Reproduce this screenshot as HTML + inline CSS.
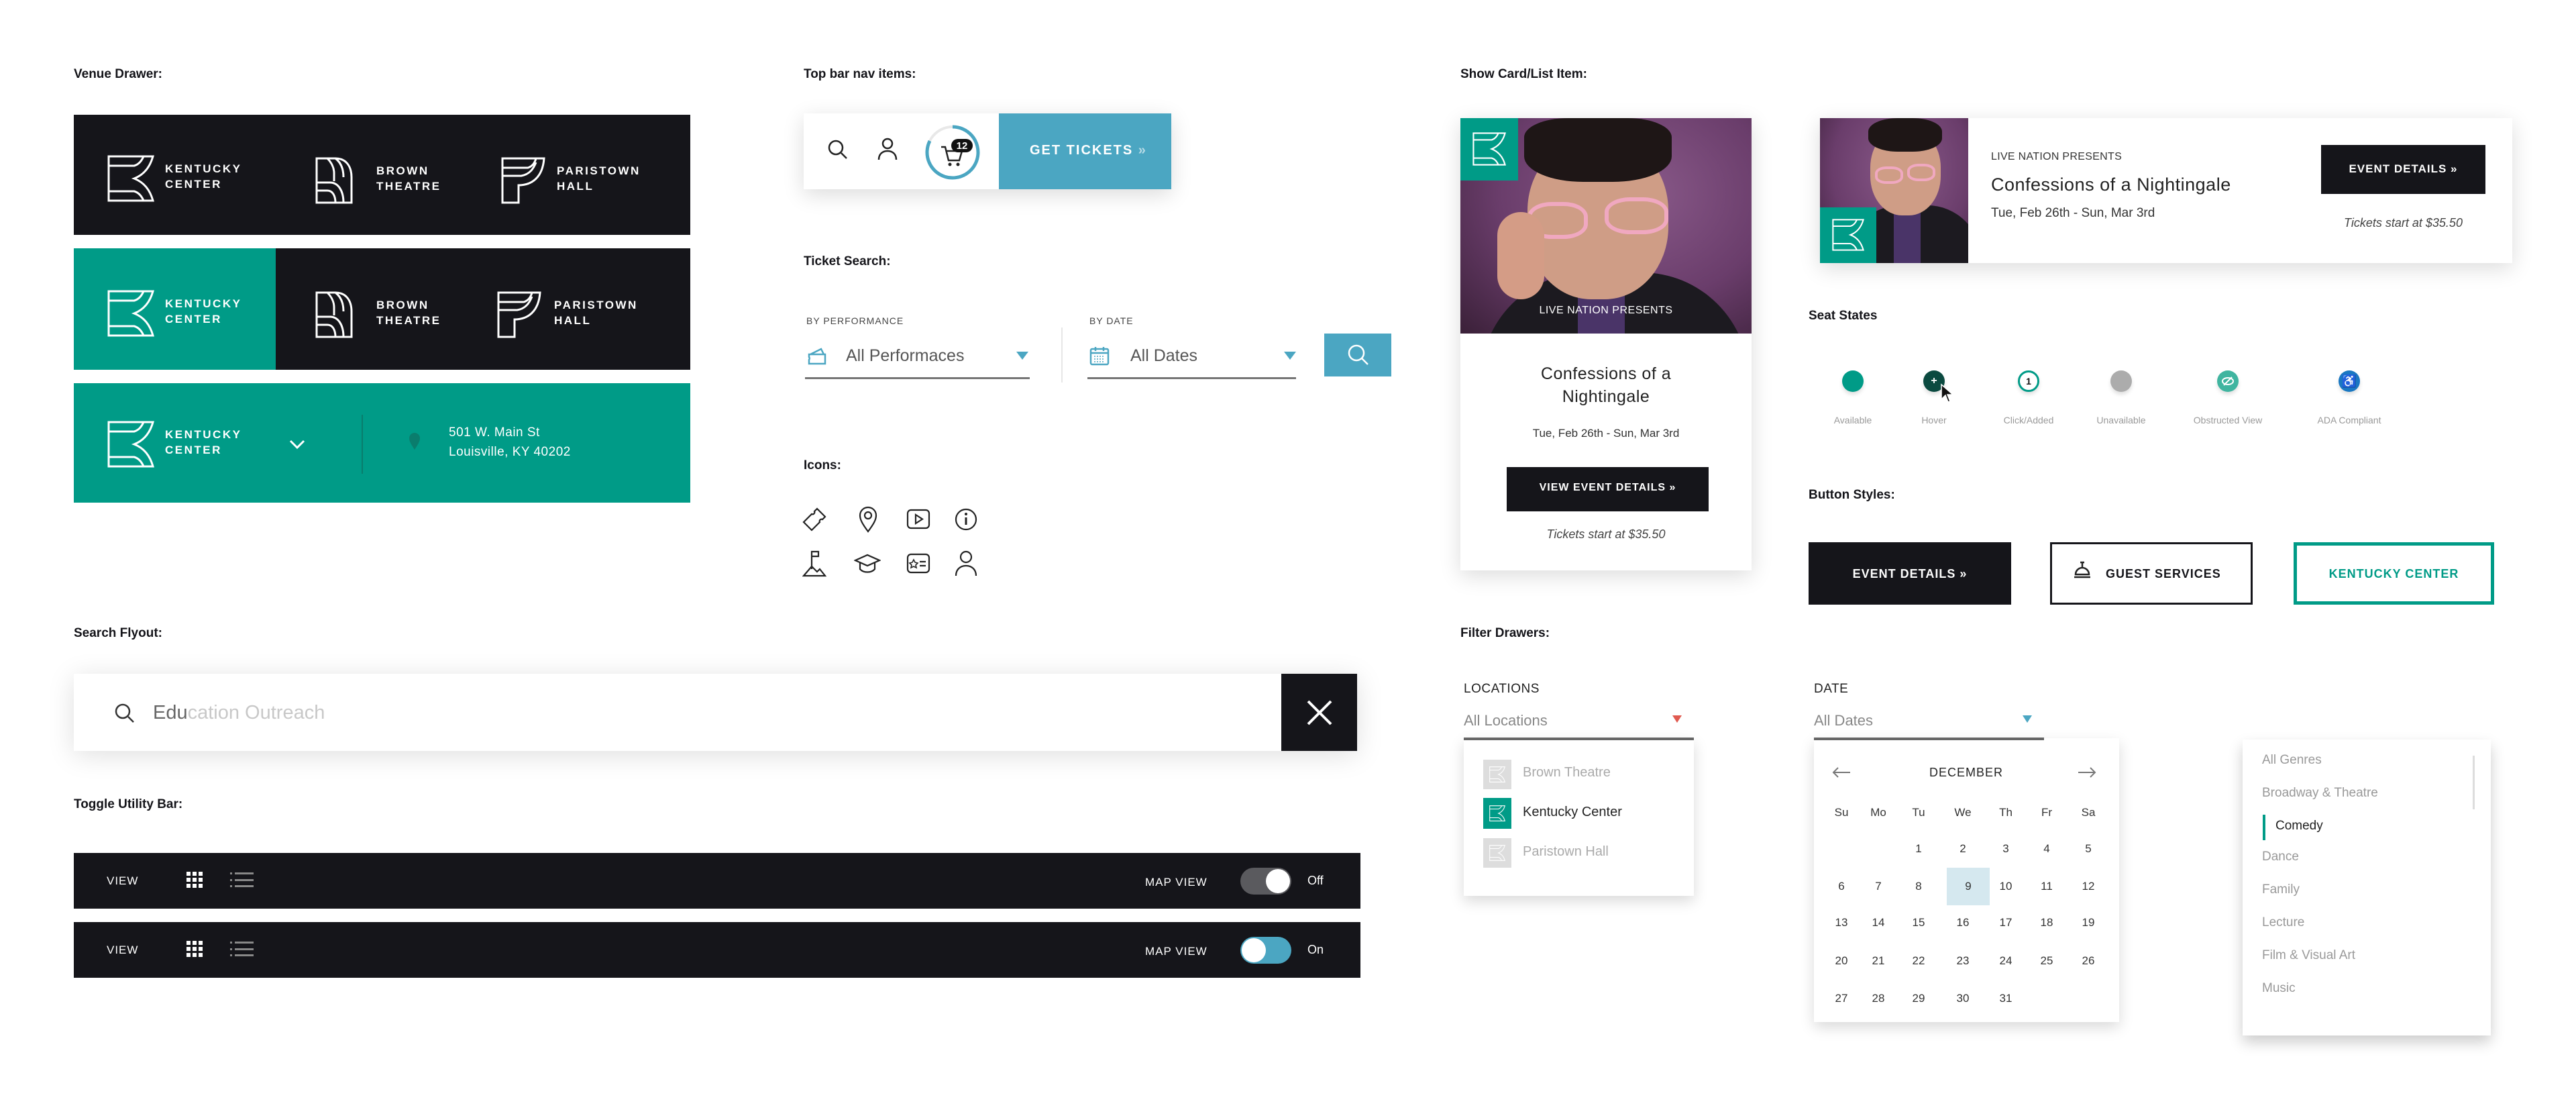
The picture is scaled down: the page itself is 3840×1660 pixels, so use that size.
<!DOCTYPE html>
<html><head><meta charset="utf-8">
<style>
*{margin:0;padding:0;box-sizing:border-box}
body{width:3840px;height:1660px;background:#fff;position:relative;overflow:hidden;font-family:"Liberation Sans",sans-serif;color:#141419}
.a{position:absolute}
.lbl{position:absolute;font-weight:bold;font-size:19px;color:#141419}
.dark{background:#15151a}
.teal{background:#009b87}
.vt{position:absolute;color:#fff;font-weight:bold;font-size:17px;letter-spacing:2.5px;line-height:23px}
.sh{box-shadow:0 8px 30px rgba(0,0,0,.14)}
.small{font-size:14px;letter-spacing:1px;color:#444}
.seatl{position:absolute;top:618px;font-size:14px;color:#999;transform:translateX(-50%);white-space:nowrap}
.seat{position:absolute;top:552px;width:32px;height:32px;border-radius:50%;transform:translateX(-50%);box-shadow:0 4px 6px rgba(0,0,0,.12);display:flex;align-items:center;justify-content:center;color:#fff;font-size:16px;font-weight:bold}
.cal{position:absolute;font-size:17px;color:#333;transform:translateX(-50%)}
.gen{position:absolute;left:3372px;font-size:19px;color:#999}
</style></head><body>

<svg width="0" height="0" style="position:absolute">
<defs>
<g id="K" fill="none" stroke="currentColor" stroke-width="3">
<path d="M2 2H68C63 20 53 30 40 35C53 40 63 50 68 68H2Z"/>
<path d="M2 16H40C47 14 51 9 54 2"/>
<path d="M2 54H40C47 56 51 61 54 68"/>
</g>
<g id="B" fill="none" stroke="currentColor" stroke-width="3">
<path d="M2 2H30C46 2 54 14 54 30V68H2Z"/>
<path d="M2 38H22C34 38 42 50 42 68"/>
<path d="M2 50H18C26 50 30 58 30 68"/>
<path d="M30 2C38 8 42 18 42 30"/>
<path d="M18 2C24 8 28 16 28 24V36"/>
</g>
<g id="P" fill="none" stroke="currentColor" stroke-width="3">
<path d="M2 2H64C62 30 46 42 26 42V68H2Z"/>
<path d="M2 16H40C46 14 50 10 52 2"/>
<path d="M2 28H30C42 26 48 18 52 8"/>
</g>
</defs></svg>

<!-- Venue Drawer -->
<div class="lbl" style="left:110px;top:100px">Venue Drawer:</div>
<div class="a dark" style="left:110px;top:171px;width:919px;height:179px"></div>
<svg class="a" style="left:160px;top:231px;color:#fff" width="70" height="70" viewBox="0 0 70 70"><use href="#K"/></svg>
<div class="vt" style="left:246px;top:240px">KENTUCKY<br>CENTER</div>
<svg class="a" style="left:470px;top:234px;color:#fff" width="58" height="70" viewBox="0 0 58 70"><use href="#B"/></svg>
<div class="vt" style="left:561px;top:243px">BROWN<br>THEATRE</div>
<svg class="a" style="left:747px;top:234px;color:#fff" width="66" height="70" viewBox="0 0 66 70"><use href="#P"/></svg>
<div class="vt" style="left:830px;top:243px">PARISTOWN<br>HALL</div>

<div class="a dark" style="left:110px;top:370px;width:919px;height:181px"></div>
<div class="a teal" style="left:110px;top:370px;width:301px;height:181px"></div>
<svg class="a" style="left:160px;top:432px;color:#fff" width="70" height="70" viewBox="0 0 70 70"><use href="#K"/></svg>
<div class="vt" style="left:246px;top:441px">KENTUCKY<br>CENTER</div>
<svg class="a" style="left:470px;top:434px;color:#fff" width="58" height="70" viewBox="0 0 58 70"><use href="#B"/></svg>
<div class="vt" style="left:561px;top:443px">BROWN<br>THEATRE</div>
<svg class="a" style="left:741px;top:434px;color:#fff" width="66" height="70" viewBox="0 0 66 70"><use href="#P"/></svg>
<div class="vt" style="left:826px;top:443px">PARISTOWN<br>HALL</div>

<div class="a teal" style="left:110px;top:571px;width:919px;height:178px"></div>
<svg class="a" style="left:160px;top:627px;color:#fff" width="70" height="70" viewBox="0 0 70 70"><use href="#K"/></svg>
<div class="vt" style="left:246px;top:636px">KENTUCKY<br>CENTER</div>
<svg class="a" style="left:430px;top:654px" width="26" height="16" viewBox="0 0 26 16"><path d="M3 3L13 13L23 3" fill="none" stroke="#fff" stroke-width="3"/></svg>
<div class="a" style="left:539px;top:618px;width:2px;height:88px;background:#0a7d6d"></div>
<svg class="a" style="left:608px;top:643px" width="20" height="28" viewBox="0 0 20 28"><path d="M10 27C4 18 2 14 2 10A8 8 0 0 1 18 10C18 14 16 18 10 27Z" fill="#0a7d6d"/></svg>
<div class="a" style="left:669px;top:630px;color:#fff;font-size:19px;line-height:29px;letter-spacing:.5px">501 W. Main St<br>Louisville, KY 40202</div>

<!-- Top bar nav -->
<div class="lbl" style="left:1198px;top:100px">Top bar nav items:</div>
<div class="a sh" style="left:1198px;top:169px;width:548px;height:113px;background:#fff"></div>
<div class="a" style="left:1489px;top:169px;width:257px;height:113px;background:#4ba6c2"></div>
<div class="a" style="left:1535px;top:213px;color:#fff;font-weight:bold;font-size:20px;letter-spacing:2px">GET TICKETS <span style="opacity:.6">»</span></div>
<svg class="a" style="left:1233px;top:207px" width="32" height="32" viewBox="0 0 32 32"><circle cx="13" cy="13" r="10" fill="none" stroke="#222" stroke-width="2.5"/><path d="M21 21L29 29" stroke="#222" stroke-width="2.5"/></svg>
<svg class="a" style="left:1307px;top:205px" width="32" height="34" viewBox="0 0 32 34"><circle cx="16" cy="9" r="7" fill="none" stroke="#222" stroke-width="2.5"/><path d="M3 33C3 24 9 20 16 20S29 24 29 33" fill="none" stroke="#222" stroke-width="2.5"/></svg>
<svg class="a" style="left:1378px;top:185px" width="84" height="84" viewBox="0 0 84 84"><circle cx="42" cy="42" r="38" fill="none" stroke="#e8e8e8" stroke-width="4"/><path d="M42 4A38 38 0 1 1 8 25" fill="none" stroke="#4ba6c2" stroke-width="5"/><path d="M25 34H31L36 54H52L56 40H33" fill="none" stroke="#222" stroke-width="2.5"/><circle cx="38" cy="60" r="2.5" fill="#222"/><circle cx="50" cy="60" r="2.5" fill="#222"/><rect x="40" y="22" width="32" height="20" rx="10" fill="#111"/><text x="56" y="37" text-anchor="middle" fill="#fff" font-size="15" font-weight="bold" font-family="Liberation Sans">12</text></svg>

<!-- Ticket Search -->
<div class="lbl" style="left:1198px;top:379px">Ticket Search:</div>
<div class="a small" style="left:1202px;top:470px">BY PERFORMANCE</div>
<svg class="a" style="left:1204px;top:518px" width="30" height="28" viewBox="0 0 30 28"><path d="M2 10H26V24H2V18A3 3 0 0 0 2 14Z M4 10L20 2L24 10" fill="none" stroke="#4ba6c2" stroke-width="2.5"/></svg>
<div class="a" style="left:1261px;top:516px;font-size:25px;color:#555">All Performaces</div>
<svg class="a" style="left:1515px;top:524px" width="18" height="14"><path d="M0 0H18L9 12Z" fill="#4ba6c2"/></svg>
<div class="a" style="left:1200px;top:562px;width:335px;height:3px;background:#777"></div>
<div class="a" style="left:1582px;top:488px;width:2px;height:82px;background:#e6e6e6"></div>
<div class="a small" style="left:1624px;top:470px">BY DATE</div>
<svg class="a" style="left:1624px;top:515px" width="30" height="30" viewBox="0 0 30 30"><rect x="2" y="5" width="26" height="23" rx="2" fill="none" stroke="#4ba6c2" stroke-width="2.5"/><path d="M2 11H28M9 2V8M21 2V8" stroke="#4ba6c2" stroke-width="2.5"/><path d="M7 16H23M7 20H23M7 24H23" stroke="#4ba6c2" stroke-width="1.5" stroke-dasharray="2 2"/></svg>
<div class="a" style="left:1685px;top:516px;font-size:25px;color:#555">All Dates</div>
<svg class="a" style="left:1914px;top:524px" width="18" height="14"><path d="M0 0H18L9 12Z" fill="#4ba6c2"/></svg>
<div class="a" style="left:1621px;top:562px;width:311px;height:3px;background:#777"></div>
<div class="a" style="left:1974px;top:497px;width:100px;height:64px;background:#4ba6c2"></div>
<svg class="a" style="left:2008px;top:512px" width="34" height="34" viewBox="0 0 34 34"><circle cx="14" cy="14" r="11" fill="none" stroke="#fff" stroke-width="2.5"/><path d="M22 22L31 31" stroke="#fff" stroke-width="2.5"/></svg>

<!-- Icons -->
<div class="lbl" style="left:1198px;top:683px">Icons:</div>
<svg class="a" style="left:1196px;top:756px" width="36" height="36" viewBox="0 0 36 36"><path d="M22 2L34 14L30 18A3 3 0 0 0 26 22L14 34L2 22L14 10A3 3 0 0 0 18 6Z" fill="none" stroke="#222" stroke-width="2.2"/></svg>
<svg class="a" style="left:1279px;top:754px" width="30" height="40" viewBox="0 0 30 40"><path d="M15 38C6 26 3 20 3 14A12 12 0 0 1 27 14C27 20 24 26 15 38Z" fill="none" stroke="#222" stroke-width="2.2"/><circle cx="15" cy="14" r="5" fill="none" stroke="#222" stroke-width="2.2"/></svg>
<svg class="a" style="left:1351px;top:758px" width="36" height="32" viewBox="0 0 36 32"><rect x="2" y="2" width="32" height="27" rx="5" fill="none" stroke="#222" stroke-width="2.2"/><path d="M14 9L24 15.5L14 22Z" fill="none" stroke="#222" stroke-width="2.2"/></svg>
<svg class="a" style="left:1422px;top:756px" width="36" height="36" viewBox="0 0 36 36"><circle cx="18" cy="18" r="15" fill="none" stroke="#222" stroke-width="2.2"/><path d="M18 15V26" stroke="#222" stroke-width="3"/><circle cx="18" cy="10" r="2" fill="#222"/></svg>
<svg class="a" style="left:1196px;top:820px" width="36" height="40" viewBox="0 0 36 40"><path d="M14 28V2H24V9H14" fill="none" stroke="#222" stroke-width="2.2"/><path d="M2 38L14 24L22 32L26 28L34 38Z" fill="none" stroke="#222" stroke-width="2.2"/></svg>
<svg class="a" style="left:1273px;top:824px" width="40" height="32" viewBox="0 0 40 32"><path d="M2 11L20 3L38 11L20 19Z" fill="none" stroke="#222" stroke-width="2.2"/><path d="M9 15V24C14 30 26 30 31 24V15" fill="none" stroke="#222" stroke-width="2.2"/></svg>
<svg class="a" style="left:1351px;top:824px" width="36" height="32" viewBox="0 0 36 32"><rect x="2" y="2" width="32" height="27" rx="5" fill="none" stroke="#222" stroke-width="2.2"/><path d="M11 10L13 14L17 15L14 18L15 22L11 20L7 22L8 18L5 15L9 14Z" fill="none" stroke="#222" stroke-width="1.6"/><path d="M20 13H29M20 19H29" stroke="#222" stroke-width="2.2"/></svg>
<svg class="a" style="left:1422px;top:820px" width="36" height="40" viewBox="0 0 36 40"><circle cx="18" cy="10" r="8" fill="none" stroke="#222" stroke-width="2.2"/><path d="M3 38C3 28 10 23 18 23S33 28 33 38" fill="none" stroke="#222" stroke-width="2.2"/></svg>

<!-- Search flyout -->
<div class="lbl" style="left:110px;top:933px">Search Flyout:</div>
<div class="a" style="left:110px;top:1004px;width:1913px;height:115px;background:#fff;box-shadow:0 6px 40px rgba(0,0,0,.13)"></div>
<div class="a dark" style="left:1910px;top:1004px;width:113px;height:115px"></div>
<svg class="a" style="left:1946px;top:1041px" width="42" height="42" viewBox="0 0 42 42"><path d="M4 4L38 38M38 4L4 38" stroke="#fff" stroke-width="4"/></svg>
<svg class="a" style="left:170px;top:1047px" width="32" height="32" viewBox="0 0 32 32"><circle cx="13" cy="13" r="10" fill="none" stroke="#333" stroke-width="2.5"/><path d="M21 21L29 29" stroke="#333" stroke-width="2.5"/></svg>
<div class="a" style="left:228px;top:1046px;font-size:29px;color:#666">Edu<span style="color:#c8c8c8">cation Outreach</span></div>

<!-- Toggle Utility -->
<div class="lbl" style="left:110px;top:1188px">Toggle Utility Bar:</div>
<div class="a dark" style="left:110px;top:1271px;width:1918px;height:83px"></div>
<div class="a dark" style="left:110px;top:1374px;width:1918px;height:83px"></div>
<div class="a" style="left:159px;top:1303px;color:#fff;font-size:17px;letter-spacing:1px">VIEW</div>
<div class="a" style="left:159px;top:1406px;color:#fff;font-size:17px;letter-spacing:1px">VIEW</div>
<svg class="a" style="left:277px;top:1298px" width="26" height="26" viewBox="0 0 26 26" fill="#fff"><rect x="1" y="1" width="6" height="6"/><rect x="10" y="1" width="6" height="6"/><rect x="19" y="1" width="6" height="6"/><rect x="1" y="10" width="6" height="6"/><rect x="10" y="10" width="6" height="6"/><rect x="19" y="10" width="6" height="6"/><rect x="1" y="19" width="6" height="6"/><rect x="10" y="19" width="6" height="6"/><rect x="19" y="19" width="6" height="6"/></svg>
<svg class="a" style="left:277px;top:1401px" width="26" height="26" viewBox="0 0 26 26" fill="#fff"><rect x="1" y="1" width="6" height="6"/><rect x="10" y="1" width="6" height="6"/><rect x="19" y="1" width="6" height="6"/><rect x="1" y="10" width="6" height="6"/><rect x="10" y="10" width="6" height="6"/><rect x="19" y="10" width="6" height="6"/><rect x="1" y="19" width="6" height="6"/><rect x="10" y="19" width="6" height="6"/><rect x="19" y="19" width="6" height="6"/></svg>
<svg class="a" style="left:343px;top:1298px" width="36" height="26" viewBox="0 0 36 26" fill="#888"><rect x="0" y="2" width="3" height="3"/><rect x="7" y="2" width="28" height="3"/><rect x="0" y="12" width="3" height="3"/><rect x="7" y="12" width="28" height="3"/><rect x="0" y="21" width="3" height="3"/><rect x="7" y="21" width="28" height="3"/></svg>
<svg class="a" style="left:343px;top:1401px" width="36" height="26" viewBox="0 0 36 26" fill="#888"><rect x="0" y="2" width="3" height="3"/><rect x="7" y="2" width="28" height="3"/><rect x="0" y="12" width="3" height="3"/><rect x="7" y="12" width="28" height="3"/><rect x="0" y="21" width="3" height="3"/><rect x="7" y="21" width="28" height="3"/></svg>
<div class="a" style="left:1707px;top:1305px;color:#fff;font-size:17px;letter-spacing:1px">MAP VIEW</div>
<div class="a" style="left:1707px;top:1408px;color:#fff;font-size:17px;letter-spacing:1px">MAP VIEW</div>
<div class="a" style="left:1849px;top:1293px;width:76px;height:40px;border-radius:20px;background:#5a5a5e"></div>
<div class="a" style="left:1887px;top:1295px;width:36px;height:36px;border-radius:50%;background:#fff"></div>
<div class="a" style="left:1849px;top:1396px;width:76px;height:40px;border-radius:20px;background:#4ba6c2"></div>
<div class="a" style="left:1851px;top:1398px;width:36px;height:36px;border-radius:50%;background:#fff"></div>
<div class="a" style="left:1949px;top:1302px;color:#fff;font-size:18px">Off</div>
<div class="a" style="left:1949px;top:1405px;color:#fff;font-size:18px">On</div>

<!-- Show card -->
<div class="lbl" style="left:2177px;top:100px">Show Card/List Item:</div>
<div class="a sh" style="left:2177px;top:176px;width:434px;height:674px;background:#fff"></div>
<div class="a" style="left:2177px;top:176px;width:434px;height:321px;overflow:hidden;background:radial-gradient(ellipse at 60% 35%,#8a5a8a 0%,#6a3d6b 55%,#3a2038 100%)">
  <div class="a" style="left:30px;top:230px;width:400px;height:200px;border-radius:160px 160px 0 0;background:#1c1a20"></div>
  <div class="a" style="left:175px;top:240px;width:70px;height:90px;background:#4a3468"></div>
  <div class="a" style="left:100px;top:30px;width:210px;height:240px;border-radius:45%;background:#cf9d86"></div>
  <div class="a" style="left:95px;top:0px;width:220px;height:95px;border-radius:30% 30% 40% 40%;background:#1e1616"></div>
  <div class="a" style="left:100px;top:125px;width:90px;height:55px;border:6px solid #f0a8c0;border-radius:40%"></div>
  <div class="a" style="left:215px;top:118px;width:95px;height:55px;border:6px solid #f0a8c0;border-radius:40%"></div>
  <div class="a" style="left:55px;top:140px;width:70px;height:130px;border-radius:35px;background:#d49c86"></div>
</div>
<div class="a teal" style="left:2177px;top:176px;width:86px;height:93px"></div>
<svg class="a" style="left:2195px;top:197px;color:#fff" width="50" height="50" viewBox="0 0 70 70"><use href="#K"/></svg>
<div class="a" style="left:2177px;top:454px;width:434px;text-align:center;color:#fff;font-size:16px;letter-spacing:.5px">LIVE NATION PRESENTS</div>
<div class="a" style="left:2177px;top:540px;width:434px;text-align:center;font-size:25px;line-height:34px;letter-spacing:.5px;color:#222">Confessions of a<br>Nightingale</div>
<div class="a" style="left:2177px;top:636px;width:434px;text-align:center;font-size:17px;color:#333">Tue, Feb 26th - Sun, Mar 3rd</div>
<div class="a dark" style="left:2246px;top:696px;width:301px;height:66px"></div>
<div class="a" style="left:2246px;top:718px;width:301px;text-align:center;color:#fff;font-weight:bold;font-size:16px;letter-spacing:1px">VIEW EVENT DETAILS »</div>
<div class="a" style="left:2177px;top:786px;width:434px;text-align:center;font-size:18px;font-style:italic;color:#444">Tickets start at $35.50</div>

<!-- List item -->
<div class="a sh" style="left:2713px;top:176px;width:1032px;height:216px;background:#fff"></div>
<div class="a" style="left:2713px;top:176px;width:221px;height:216px;overflow:hidden;background:radial-gradient(ellipse at 55% 35%,#8a5a8a 0%,#6a3d6b 60%,#3a2038 100%)">
  <div class="a" style="left:40px;top:130px;width:200px;height:120px;border-radius:80px 80px 0 0;background:#1c1a20"></div>
  <div class="a" style="left:110px;top:140px;width:40px;height:80px;background:#4a3468"></div>
  <div class="a" style="left:75px;top:15px;width:105px;height:130px;border-radius:45%;background:#cf9d86"></div>
  <div class="a" style="left:72px;top:0px;width:110px;height:50px;border-radius:40%;background:#1e1616"></div>
  <div class="a" style="left:82px;top:72px;width:42px;height:26px;border:4px solid #f0a8c0;border-radius:40%"></div>
  <div class="a" style="left:130px;top:68px;width:42px;height:26px;border:4px solid #f0a8c0;border-radius:40%"></div>
</div>
<div class="a teal" style="left:2713px;top:309px;width:84px;height:83px"></div>
<svg class="a" style="left:2731px;top:326px;color:#fff" width="48" height="48" viewBox="0 0 70 70"><use href="#K"/></svg>
<div class="a" style="left:2968px;top:225px;font-size:16px;color:#333;letter-spacing:.3px">LIVE NATION PRESENTS</div>
<div class="a" style="left:2968px;top:260px;font-size:27px;color:#222;letter-spacing:.5px">Confessions of a Nightingale</div>
<div class="a" style="left:2968px;top:307px;font-size:19px;color:#333">Tue, Feb 26th - Sun, Mar 3rd</div>
<div class="a dark" style="left:3460px;top:216px;width:245px;height:73px"></div>
<div class="a" style="left:3460px;top:242px;width:245px;text-align:center;color:#fff;font-weight:bold;font-size:17px;letter-spacing:1px">EVENT DETAILS »</div>
<div class="a" style="left:3460px;top:322px;width:245px;text-align:center;font-size:18px;font-style:italic;color:#444">Tickets start at $35.50</div>

<!-- Seat states -->
<div class="lbl" style="left:2696px;top:460px">Seat States</div>
<div class="seat" style="left:2762px;background:#009b87"></div>
<div class="seat" style="left:2883px;background:#0b4a40">+</div>
<svg class="a" style="left:2892px;top:571px" width="20" height="30" viewBox="0 0 20 30"><path d="M2 2V24L8 18L12 28L15 27L11 17H19Z" fill="#111" stroke="#fff" stroke-width="1.5"/></svg>
<div class="seat" style="left:3024px;background:#fff;border:3px solid #009b87;color:#111;font-size:14px">1</div>
<div class="seat" style="left:3162px;background:#acacac"></div>
<div class="seat" style="left:3321px;background:#40b5a0"><svg width="20" height="14" viewBox="0 0 20 14"><ellipse cx="10" cy="7" rx="8" ry="5" fill="none" stroke="#fff" stroke-width="2"/><path d="M4 13L16 1" stroke="#fff" stroke-width="2"/></svg></div>
<div class="seat" style="left:3502px;background:#1a78c2;font-size:18px">♿</div>
<div class="seatl" style="left:2762px">Available</div>
<div class="seatl" style="left:2883px">Hover</div>
<div class="seatl" style="left:3024px">Click/Added</div>
<div class="seatl" style="left:3162px">Unavailable</div>
<div class="seatl" style="left:3321px">Obstructed View</div>
<div class="seatl" style="left:3502px">ADA Compliant</div>

<!-- Buttons -->
<div class="lbl" style="left:2696px;top:727px">Button Styles:</div>
<div class="a dark" style="left:2696px;top:808px;width:302px;height:93px"></div>
<div class="a" style="left:2696px;top:845px;width:302px;text-align:center;color:#fff;font-weight:bold;font-size:18px;letter-spacing:1px">EVENT DETAILS »</div>
<div class="a" style="left:3056px;top:808px;width:302px;height:93px;border:3px solid #15151a"></div>
<svg class="a" style="left:3090px;top:834px" width="28" height="30" viewBox="0 0 28 30"><path d="M4 22A10 10 0 0 1 24 22Z M2 26H26M14 4V12M11 4H17" fill="none" stroke="#222" stroke-width="2.5"/></svg>
<div class="a" style="left:3139px;top:845px;font-weight:bold;font-size:18px;letter-spacing:1px">GUEST SERVICES</div>
<div class="a" style="left:3419px;top:808px;width:299px;height:93px;border:5px solid #009b87"></div>
<div class="a" style="left:3419px;top:845px;width:299px;text-align:center;color:#009b87;font-weight:bold;font-size:18px;letter-spacing:1px">KENTUCKY CENTER</div>

<!-- Filter drawers -->
<div class="lbl" style="left:2177px;top:933px">Filter Drawers:</div>
<div class="a" style="left:2182px;top:1016px;font-size:19px;color:#222;letter-spacing:.5px">LOCATIONS</div>
<div class="a" style="left:2182px;top:1061px;font-size:22px;color:#888">All Locations</div>
<svg class="a" style="left:2493px;top:1066px" width="14" height="12"><path d="M0 0H14L7 11Z" fill="#e05a50"/></svg>
<div class="a" style="left:2182px;top:1100px;width:343px;height:235px;background:#fff;box-shadow:0 8px 20px rgba(0,0,0,.15)"></div>
<div class="a" style="left:2182px;top:1099px;width:343px;height:4px;background:#666"></div>
<div class="a" style="left:2211px;top:1132px;width:42px;height:44px;background:#ddd"></div>
<svg class="a" style="left:2220px;top:1142px;color:#fff" width="24" height="24" viewBox="0 0 70 70"><use href="#K"/></svg>
<div class="a" style="left:2270px;top:1140px;font-size:20px;color:#aaa">Brown Theatre</div>
<div class="a teal" style="left:2211px;top:1189px;width:42px;height:46px"></div>
<svg class="a" style="left:2220px;top:1200px;color:#fff" width="24" height="24" viewBox="0 0 70 70"><use href="#K"/></svg>
<div class="a" style="left:2270px;top:1199px;font-size:20px;color:#222">Kentucky Center</div>
<div class="a" style="left:2211px;top:1249px;width:42px;height:44px;background:#ddd"></div>
<svg class="a" style="left:2220px;top:1259px;color:#fff" width="24" height="24" viewBox="0 0 70 70"><use href="#K"/></svg>
<div class="a" style="left:2270px;top:1258px;font-size:20px;color:#aaa">Paristown Hall</div>

<div class="a" style="left:2704px;top:1016px;font-size:19px;color:#222;letter-spacing:.5px">DATE</div>
<div class="a" style="left:2704px;top:1061px;font-size:22px;color:#888">All Dates</div>
<svg class="a" style="left:3015px;top:1066px" width="14" height="12"><path d="M0 0H14L7 11Z" fill="#4ba6c2"/></svg>
<div class="a" style="left:2704px;top:1100px;width:455px;height:423px;background:#fff;box-shadow:0 8px 20px rgba(0,0,0,.15)"></div>
<div class="a" style="left:2704px;top:1099px;width:343px;height:4px;background:#666"></div>
<svg class="a" style="left:2730px;top:1142px" width="30" height="18" viewBox="0 0 30 18"><path d="M28 9H3M10 2L3 9L10 16" fill="none" stroke="#777" stroke-width="2"/></svg>
<svg class="a" style="left:3096px;top:1142px" width="30" height="18" viewBox="0 0 30 18"><path d="M2 9H27M20 2L27 9L20 16" fill="none" stroke="#777" stroke-width="2"/></svg>
<div class="a" style="left:2931px;top:1141px;transform:translateX(-50%);font-size:18px;letter-spacing:1px;color:#222">DECEMBER</div>
<div class="a" style="left:2902px;top:1293px;width:64px;height:56px;background:#d5e8ef"></div>
<div class="cal" style="left:2745px;top:1201px">Su</div><div class="cal" style="left:2800px;top:1201px">Mo</div><div class="cal" style="left:2860px;top:1201px">Tu</div><div class="cal" style="left:2926px;top:1201px">We</div><div class="cal" style="left:2990px;top:1201px">Th</div><div class="cal" style="left:3051px;top:1201px">Fr</div><div class="cal" style="left:3113px;top:1201px">Sa</div>
<div class="cal" style="left:2860px;top:1255px">1</div><div class="cal" style="left:2926px;top:1255px">2</div><div class="cal" style="left:2990px;top:1255px">3</div><div class="cal" style="left:3051px;top:1255px">4</div><div class="cal" style="left:3113px;top:1255px">5</div>
<div class="cal" style="left:2745px;top:1311px">6</div><div class="cal" style="left:2800px;top:1311px">7</div><div class="cal" style="left:2860px;top:1311px">8</div><div class="cal" style="left:2934px;top:1311px">9</div><div class="cal" style="left:2990px;top:1311px">10</div><div class="cal" style="left:3051px;top:1311px">11</div><div class="cal" style="left:3113px;top:1311px">12</div>
<div class="cal" style="left:2745px;top:1365px">13</div><div class="cal" style="left:2800px;top:1365px">14</div><div class="cal" style="left:2860px;top:1365px">15</div><div class="cal" style="left:2926px;top:1365px">16</div><div class="cal" style="left:2990px;top:1365px">17</div><div class="cal" style="left:3051px;top:1365px">18</div><div class="cal" style="left:3113px;top:1365px">19</div>
<div class="cal" style="left:2745px;top:1422px">20</div><div class="cal" style="left:2800px;top:1422px">21</div><div class="cal" style="left:2860px;top:1422px">22</div><div class="cal" style="left:2926px;top:1422px">23</div><div class="cal" style="left:2990px;top:1422px">24</div><div class="cal" style="left:3051px;top:1422px">25</div><div class="cal" style="left:3113px;top:1422px">26</div>
<div class="cal" style="left:2745px;top:1478px">27</div><div class="cal" style="left:2800px;top:1478px">28</div><div class="cal" style="left:2860px;top:1478px">29</div><div class="cal" style="left:2926px;top:1478px">30</div><div class="cal" style="left:2990px;top:1478px">31</div>

<div class="a" style="left:3343px;top:1102px;width:370px;height:441px;background:#fff;box-shadow:0 10px 20px rgba(0,0,0,.2)"></div>
<div class="a" style="left:3686px;top:1126px;width:3px;height:80px;background:#ddd"></div>
<div class="gen" style="top:1122px">All Genres</div>
<div class="gen" style="top:1171px">Broadway &amp; Theatre</div>
<div class="a" style="left:3373px;top:1214px;width:4px;height:38px;background:#009b87"></div>
<div class="gen" style="top:1220px;left:3392px;color:#222">Comedy</div>
<div class="gen" style="top:1266px">Dance</div>
<div class="gen" style="top:1315px">Family</div>
<div class="gen" style="top:1364px">Lecture</div>
<div class="gen" style="top:1413px">Film &amp; Visual Art</div>
<div class="gen" style="top:1462px">Music</div>
</body></html>
